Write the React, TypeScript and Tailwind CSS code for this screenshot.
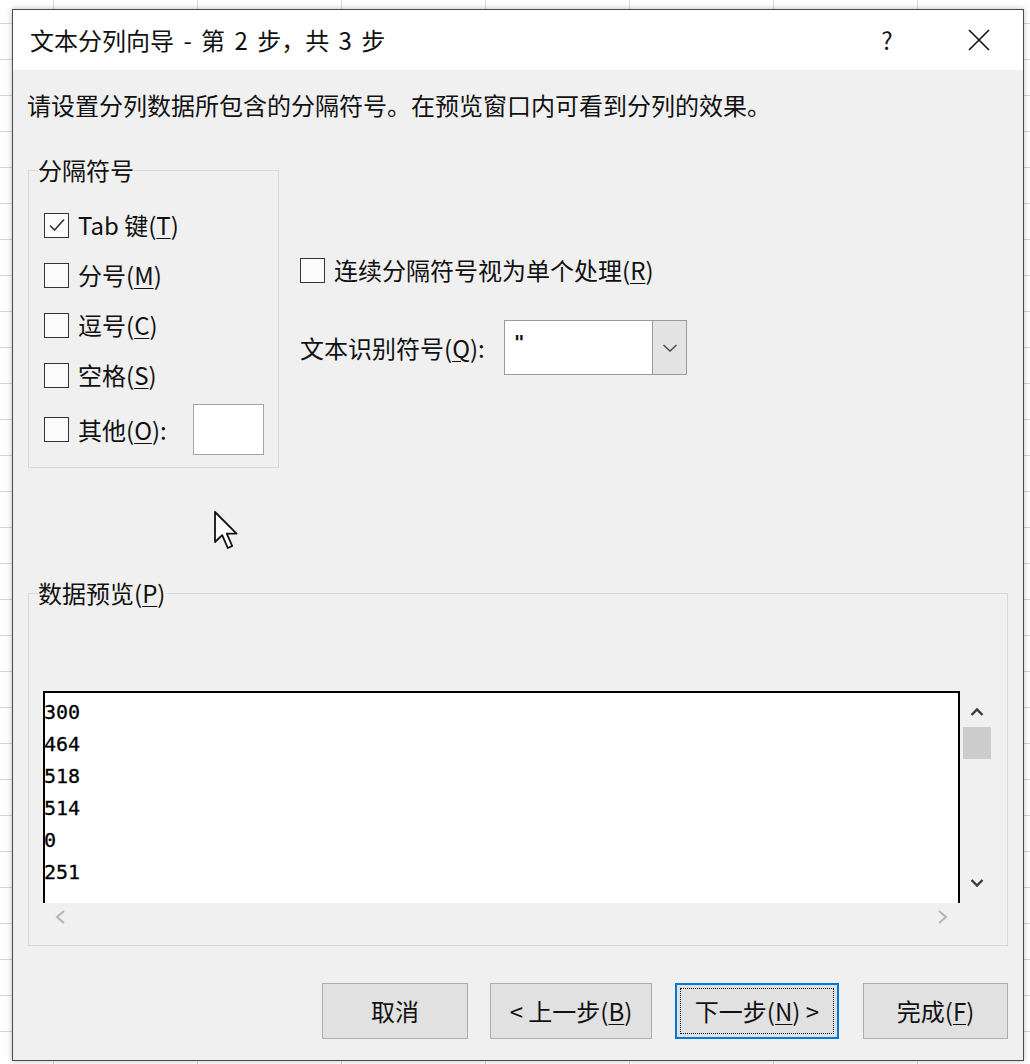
import type { ReactNode } from "react";

const ui = "font-['Noto_Sans_CJK_SC','Noto_Sans',sans-serif]";

function Key({ k }: { k: string }) {
  return (
    <>
      (<span className="underline decoration-1 underline-offset-[3px]">{k}</span>)
    </>
  );
}

function CheckBox({ checked }: { checked?: boolean }) {
  return (
    <span className="flex h-[25px] w-[25px] shrink-0 items-center justify-center border-[1.5px] border-[#333] bg-[#fbfbfb]">
      {checked && (
        <svg width="20" height="20" viewBox="0 0 20 20" fill="none">
          <path d="M3 10.5 L7.5 15 L17 4.5" stroke="#333" strokeWidth="1.6" />
        </svg>
      )}
    </span>
  );
}

function Option({ checked, children }: { checked?: boolean; children: ReactNode }) {
  return (
    <div className="flex h-[50px] items-center gap-[9px]">
      <CheckBox checked={checked} />
      <span>{children}</span>
    </div>
  );
}

function Button({ focused, w, children }: { focused?: boolean; w: string; children: ReactNode }) {
  if (focused) {
    return (
      <div className={`${w} h-[56px] border-2 border-[#0078d7] bg-[#e1e1e1] p-[3px]`}>
        <div className="flex h-full w-full items-center justify-center border border-dotted border-black">
          {children}
        </div>
      </div>
    );
  }
  return (
    <div className={`${w} flex h-[56px] items-center justify-center border border-[#adadad] bg-[#e1e1e1]`}>
      {children}
    </div>
  );
}

export default function App() {
  return (
    <div
      className={`${ui} h-[1064px] w-[1030px] overflow-hidden bg-white bg-[linear-gradient(to_right,#d6d6d6_1px,transparent_1px),linear-gradient(to_bottom,#d6d6d6_1px,transparent_1px)] bg-size-[144px_36px] bg-position-[53px_23px] pl-[12px] pt-[9px] text-[24px] text-[#111]`}
    >
      <div className="relative flex h-[1052px] w-[1012px] flex-col border border-[#4a4a4a] bg-[#f0f0f0] shadow-[0_0_6px_rgba(0,0,0,0.25)]">
        {/* title bar */}
        <div className="flex h-[60px] shrink-0 items-center bg-white pl-[17px] pr-[21px]">
          <span className="leading-[30px] [word-spacing:4px]">文本分列向导 - 第 2 步，共 3 步</span>
          <div className="ml-auto flex items-center gap-[46px]">
            <span className="flex w-[46px] justify-center text-[24px] leading-[30px]">?</span>
            <span className="flex w-[46px] justify-center">
              <svg width="22" height="22" viewBox="0 0 22 22" fill="none">
                <path d="M1 1 L21 21 M21 1 L1 21" stroke="#111" strokeWidth="1.6" />
              </svg>
            </span>
          </div>
        </div>

        <div className="flex flex-1 flex-col px-[15px]">
          <p className="-ml-[1px] mt-[20px] leading-[30px]">
            请设置分列数据所包含的分隔符号。在预览窗口内可看到分列的效果。
          </p>

          <div className="mt-[35px] flex items-start">
            <fieldset className="w-[251px] border border-[#d9d9d9]">
              <legend className="ml-[9px] leading-[30px]">分隔符号</legend>
              <div className="pb-[12px] pl-[15px] pr-[14px] pt-[15px]">
                <Option checked>
                  Tab 键<Key k="T" />
                </Option>
                <Option>
                  分号<Key k="M" />
                </Option>
                <Option>
                  逗号<Key k="C" />
                </Option>
                <Option>
                  空格<Key k="S" />
                </Option>
                <div className="mt-[4px] flex h-[51px] items-center gap-[9px]">
                  <CheckBox />
                  <span>
                    其他<Key k="O" />:
                  </span>
                  <div className="ml-auto h-[51px] w-[71px] border border-[#a3a3a3] bg-white" />
                </div>
              </div>
            </fieldset>

            <div className="ml-[21px] mt-[100px] flex flex-col">
              <div className="flex h-[30px] items-center gap-[9px]">
                <CheckBox />
                <span>
                  连续分隔符号视为单个处理<Key k="R" />
                </span>
              </div>
              <div className="mt-[35px] flex h-[55px] items-center">
                <span className="w-[204px]">
                  文本识别符号<Key k="Q" />:
                </span>
                <div className="flex h-[55px] w-[183px] border border-[#9a9a9a] bg-white">
                  <span className="flex-1 pl-[9px] pt-[6px] font-['DejaVu_Sans',sans-serif] text-[20px] font-bold leading-[30px]">"</span>
                  <span className="flex w-[34px] items-center justify-center border-l border-[#9a9a9a] bg-[#e3e3e3]">
                    <svg width="16" height="10" viewBox="0 0 16 10" fill="none">
                      <path d="M1.5 2 L8 8 L14.5 2" stroke="#444" strokeWidth="1.3" />
                    </svg>
                  </span>
                </div>
              </div>
            </div>
          </div>

          <fieldset className="mt-[110px] border border-[#d9d9d9]">
            <legend className="ml-[9px] leading-[30px]">
              数据预览<Key k="P" />
            </legend>
            <div className="pb-[14px] pl-[14px] pt-[83px]">
              <div className="flex">
                <div className="h-[212px] w-[917px] border-l-2 border-r-2 border-t-2 border-black bg-white pt-[3px] font-['DejaVu_Sans_Mono',monospace] text-[20px] leading-[32px] text-black">
                  {["300", "464", "518", "514", "0", "251"].map((n, i) => (
                    <div key={i} className="-ml-[1px] [-webkit-text-stroke:0.3px_black]">
                      {n}
                    </div>
                  ))}
                </div>
                <div className="flex w-[34px] flex-col items-center pb-[13px] pt-[14px]">
                  <svg width="14" height="14" viewBox="0 0 14 14" fill="none">
                    <path d="M1.5 10 L7 4.5 L12.5 10" stroke="#3c3c3c" strokeWidth="2.4" />
                  </svg>
                  <div className="mt-[8px] h-[32px] w-[28px] bg-[#cdcdcd]" />
                  <div className="flex-1" />
                  <svg width="14" height="14" viewBox="0 0 14 14" fill="none">
                    <path d="M1.5 4 L7 9.5 L12.5 4" stroke="#3c3c3c" strokeWidth="2.4" />
                  </svg>
                </div>
              </div>
              <div className="flex h-[28px] w-[917px] items-center justify-between px-[10px]">
                <svg width="14" height="16" viewBox="0 0 14 16" fill="none">
                  <path d="M11 2 L4 8 L11 14" stroke="#b4b4b4" strokeWidth="2" />
                </svg>
                <svg width="14" height="16" viewBox="0 0 14 16" fill="none">
                  <path d="M3 2 L10 8 L3 14" stroke="#b4b4b4" strokeWidth="2" />
                </svg>
              </div>
            </div>
          </fieldset>

          <div className="mt-[37px] flex items-center justify-end">
            <Button w="w-[146px]">取消</Button>
            <div className="ml-[22px]">
              <Button w="w-[162px]">
                &lt; 上一步<Key k="B" />
              </Button>
            </div>
            <div className="ml-[23px]">
              <Button w="w-[164px]" focused>
                下一步<Key k="N" /> &gt;
              </Button>
            </div>
            <div className="ml-[24px]">
              <Button w="w-[145px]">
                完成<Key k="F" />
              </Button>
            </div>
          </div>
        </div>

        {/* mouse pointer */}
        <svg
          className="absolute left-[200px] top-[500px]"
          width="28"
          height="42"
          viewBox="0 0 14 21"
          fill="none"
        >
          <path
            d="M1 1 L1 16 L4.6 12.6 L7.4 19 L9.6 18 L6.9 11.8 L11.8 11.8 Z"
            fill="white"
            stroke="#111"
            strokeWidth="0.9"
            strokeLinejoin="round"
          />
        </svg>
      </div>
    </div>
  );
}
